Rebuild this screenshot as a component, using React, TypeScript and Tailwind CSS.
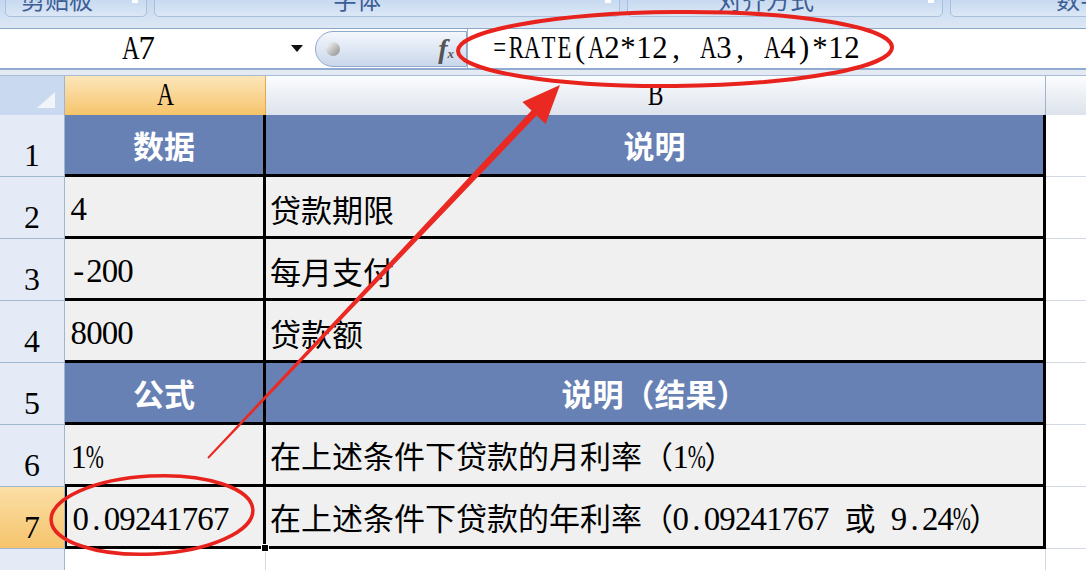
import React from "react";

type Row = {
  n: number;
  a: string;
  b: string;
  head?: boolean;
  active?: boolean;
};

const rows: Row[] = [
  { n: 1, a: "数据", b: "说明", head: true },
  { n: 2, a: "4", b: "贷款期限" },
  { n: 3, a: "-200", b: "每月支付" },
  { n: 4, a: "8000", b: "贷款额" },
  { n: 5, a: "公式", b: "说明（结果）", head: true },
  { n: 6, a: "1%", b: "在上述条件下贷款的月利率（1%）" },
  { n: 7, a: "0.09241767", b: "在上述条件下贷款的年利率（0.09241767 或 9.24%）", active: true },
];

// half-width serif run, every char in its own fixed slot like SimSun
function Mono({ text, slot = "w-[15.6px]" }: { text: string; slot?: string }) {
  return (
    <span className="font-['Liberation_Serif',serif] font-normal text-[1.06em]">
      {text.split("").map((ch, i) => {
        let squeeze = "";
        if (/[A-Z=]/.test(ch)) squeeze = "scale-x-[0.74]";
        if (ch === "%") squeeze = "scale-x-[0.66]";
        return (
          <span key={i} className={`inline-flex justify-center ${slot}`}>
            <span className={`inline-block ${squeeze}`}>{ch === " " ? "\u00a0" : ch}</span>
          </span>
        );
      })}
    </span>
  );
}

// ascii runs get the half-width face, the rest falls to the CJK font
function Mixed({ text }: { text: string }) {
  const parts = text.split(/([\x20-\x7e]+)/).filter((p) => p !== "");
  return (
    <>
      {parts.map((p, i) =>
        /^[\x20-\x7e]+$/.test(p) ? <Mono key={i} text={p} /> : <span key={i}>{p}</span>
      )}
    </>
  );
}

function RibbonGroup({ label, w, cls }: { label: string; w: string; cls: string }) {
  return (
    <div
      className={`${w} relative h-[19px] -mt-[2px] shrink-0 rounded-b-[5px] border border-[#a9c0dd] bg-gradient-to-b from-[#c6d9f0] to-[#dbe7f6] flex justify-center overflow-hidden`}
    >
      <span className={`${cls} -mt-[13px] text-[24px] leading-[26px] text-[#3d5d95] whitespace-nowrap`}>{label}</span>
      <div className="absolute right-[8px] top-0 w-[6px] h-[4px] bg-white" />
    </div>
  );
}

export default function App() {
  return (
    <div className="relative w-[1086px] h-[570px] overflow-hidden bg-white font-['Noto_Sans_CJK_SC',sans-serif] text-black">
      {/* ribbon group labels */}
      <div className="h-[29px] flex gap-[7px] pl-[5px] bg-gradient-to-b from-[#c4d7ef] to-[#dde8f5] border-b border-[#8aa5c8] overflow-hidden">
        <RibbonGroup label="剪贴板" w="w-[142px]" cls="mr-[38px]" />
        <RibbonGroup label="字体" w="w-[466px]" cls="mr-[60px]" />
        <RibbonGroup label="对齐方式" w="w-[316px]" cls="mr-[38px]" />
        <RibbonGroup label="数字" w="w-[200px]" cls="ml-[60px]" />
      </div>

      {/* formula bar */}
      <div className="h-[41px] flex items-center bg-white border-b-2 border-[#8fabcf]">
        <div className="w-[278px] flex justify-center text-[31px] leading-none">
          <Mono text="A7" />
        </div>
        <div className="w-[37px] flex justify-center">
          <svg width="12" height="8" viewBox="0 0 12 8">
            <path d="M0 0 H12 L6 7 Z" fill="#111" />
          </svg>
        </div>
        <div className="w-[152px] h-[36px] flex items-center justify-between pl-[10px] pr-[12px] rounded-l-full border border-[#8ea9cc] bg-gradient-to-b from-[#f4f7fc] to-[#c9d7eb]">
          <div className="w-[14px] h-[14px] rounded-full bg-gradient-to-br from-[#ffffff] to-[#8d8d8d]" />
          <span className="font-['Liberation_Serif',serif] italic font-bold text-[28px] leading-none text-[#555]">
            f<span className="text-[13px]">x</span>
          </span>
        </div>
        <div className="flex-1 h-full flex items-center pl-[24px] border-l border-[#9bb2d2] text-[29px] leading-none">
          <Mono text="=RATE(A2*12, A3, A4)*12" slot="w-[16px]" />
        </div>
      </div>
      <div className="h-[6px] bg-[#e3eaf3] border-b border-[#a8bcd6]" />

      {/* column headers */}
      <div className="h-[39px] flex">
        <div className="w-[65px] bg-[#c9d9ef] border-r border-[#9db5d3] flex items-end justify-end pr-[9px] pb-[7px]">
          <svg width="18" height="16" viewBox="0 0 18 16">
            <path d="M18 0 V16 H0 Z" fill="#f1f4f8" />
          </svg>
        </div>
        <div className="w-[201px] bg-gradient-to-b from-[#fce6b9] to-[#f6c46a] border-r border-[#e6a94a] flex items-end justify-center pb-[4px] text-[30px] leading-none">
          <Mono text="A" />
        </div>
        <div className="w-[780px] bg-gradient-to-b from-[#fbfcfd] to-[#dde3ec] border-r border-[#9fb4cc] flex items-end justify-center pb-[4px] text-[30px] leading-none">
          <Mono text="B" />
        </div>
        <div className="flex-1 bg-gradient-to-b from-[#fbfcfd] to-[#dde3ec]" />
      </div>

      {/* sheet rows */}
      {rows.map((r) => (
        <div key={r.n} className="h-[62px] flex">
          <div
            className={`w-[65px] border-r border-b border-[#9eb6ce] flex items-end justify-center pb-[4px] text-[30px] leading-none ${
              r.active ? "bg-gradient-to-b from-[#fbdfa5] to-[#f5c46c]" : "bg-[#e4ebf6]"
            }`}
          >
            <Mono text={String(r.n)} />
          </div>
          <div
            className={`relative w-[201px] border-r-[3px] border-b-[3px] border-black flex items-center ${
              r.head ? "bg-[#6781b5] justify-center" : "bg-[#f0f0f0] pl-[6px] pt-[4px]"
            } ${r.active ? "border-l-2" : ""}`}
          >
            <span className={`text-[31px] leading-none ${r.head ? "text-white font-bold" : ""}`}>
              <Mixed text={r.a} />
            </span>
            {r.active && <div className="absolute -right-[6px] -bottom-[6px] w-[8px] h-[8px] bg-black border border-white" />}
          </div>
          <div
            className={`w-[780px] border-r-[3px] border-b-[3px] border-black flex items-center ${
              r.head ? "bg-[#6781b5] justify-center" : "bg-[#f0f0f0] pl-[4px] pt-[4px]"
            }`}
          >
            <span className={`text-[31px] leading-none whitespace-nowrap ${r.head ? "text-white font-bold" : ""}`}>
              <Mixed text={r.b} />
            </span>
          </div>
          <div className="flex-1 bg-white border-b border-[#d3d9e2]" />
        </div>
      ))}

      {/* row 8, cut off */}
      <div className="h-[62px] flex">
        <div className="w-[65px] bg-[#e4ebf6] border-r border-[#9eb6ce] flex items-end justify-center pb-[4px] text-[30px] leading-none">
          <Mono text="8" />
        </div>
        <div className="w-[201px] bg-white border-r border-[#d3d9e2]" />
        <div className="w-[780px] bg-white border-r border-[#d3d9e2]" />
        <div className="flex-1 bg-white" />
      </div>

      {/* red hand-drawn marks */}
      <svg className="absolute inset-0 pointer-events-none" width="1086" height="570" viewBox="0 0 1086 570">
        <ellipse cx="675" cy="49" rx="217" ry="37" fill="none" stroke="#e8231d" strokeWidth="4" transform="rotate(-0.5 675 49)" />
        <ellipse cx="152" cy="515" rx="101" ry="39" fill="none" stroke="#e8231d" strokeWidth="3.5" transform="rotate(-3 152 515)" />
        <polygon
          points="207.3,457.3 531.5,110.6 522.4,102 560,85 545.6,124 536.5,115.4 208.7,458.7"
          fill="#ea2a22"
        />
      </svg>
    </div>
  );
}
